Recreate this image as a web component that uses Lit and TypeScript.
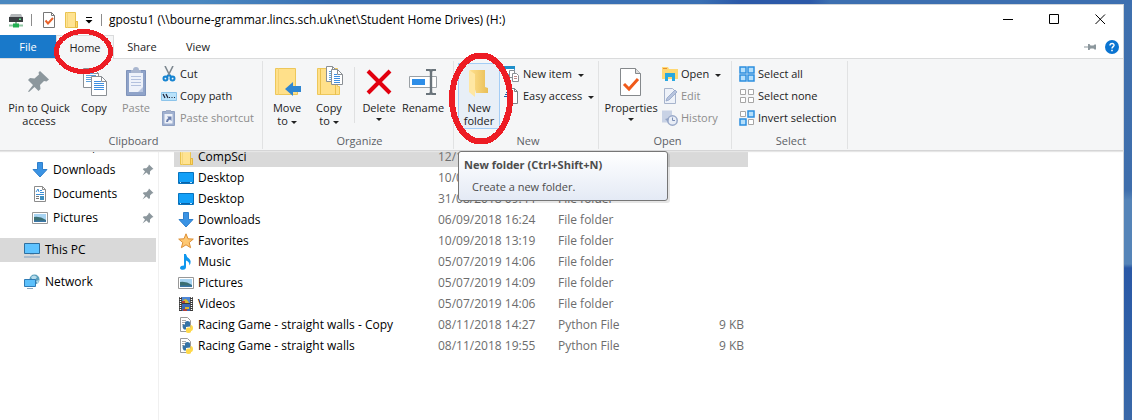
import { LitElement, html, css, svg, nothing } from "lit";
import { customElement, property } from "lit/decorators.js";

const docPath = (x: number, y: number, w: number, h: number, line = "#5aa2e0") => svg`
  <path d="M${x + 0.5} ${y + 0.5}h${w - 6}l5 5v${h - 6}h${-(w - 1)}z" fill="#fff" stroke="#8a8f94"/>
  <path d="M${x + w - 5.5} ${y + 0.5}v5h5" fill="none" stroke="#8a8f94"/>
  ${[0, 1, 2, 3, 4].map((i) => svg`<path d="M${x + 3} ${y + 5.5 + i * 2}h${i < 1 ? w - 9 : w - 6}" stroke="${line}"/>`)}`;

const icons: Record<string, { box: string; art: unknown }> = {
  drive: { box: "0 0 16 16", art: svg`<path d="M3 2h10l2 4H1z" fill="#b4b8ba"/><path d="M1 5h14v5H1z" fill="#3b3f42"/><path d="M11 6.500h2v1.500h-2z" fill="#5be08a"/><path d="M7 10h2v2H7z" fill="#8fb79b"/><path d="M1 12.500h14v2H1z" fill="#8fc7a2"/><path d="M5 11.500h6v4H5z" fill="#22b052"/>` },
  check: { box: "0 0 16 16", art: svg`<path d="M2.500 .5h8l3 3v12h-11z" fill="#fff" stroke="#777"/><path d="M10.500 .5v3h3" fill="none" stroke="#777"/><path d="M4.500 8.500l2.500 3 5-5.500" fill="none" stroke="#e8622a" stroke-width="2"/>` },
  folder: { box: "0 0 16 16", art: svg`<path d="M2.500 .5h10v9h2v6h-12z" fill="#ffe391" stroke="#e9c34f"/><path d="M4.500 .5v15" stroke="#f4d67c"/><path d="M12.500 9.500h2v6h-2z" fill="#ffd866" stroke="#e3b640"/>` },
  customize: { box: "0 0 8 8", art: svg`<path d="M1 1.500h6" stroke="#000"/><path d="M.5 4h7L4 7.500z" fill="#000"/>` },
  minimize: { box: "0 0 11 11", art: svg`<path d="M0 5.500h10" stroke="#000"/>` },
  maximize: { box: "0 0 11 11", art: svg`<path d="M.5.5h9v9h-9z" fill="none" stroke="#000"/>` },
  close: { box: "0 0 11 11", art: svg`<path d="M.5.5l9.500 9.500M10 .5L.5 10" fill="none" stroke="#000"/>` },
  collapse: { box: "0 0 12 8", art: svg`<path d="M0 4h5" stroke="#8c979d"/><path d="M4 1h1.500l1 1.500h3L10.500 1.500H12v5h-1.500l-1-1h-3L5.500 7H4z" fill="#8c979d"/>` },
  help: { box: "0 0 14 14", art: svg`<circle cx="7" cy="7" r="7" fill="#0a74d1"/><path d="M5 5.400C5 2.800 9.300 2.900 9 5.400 8.800 6.700 7 6.700 7 8.600" fill="none" stroke="#fff" stroke-width="1.500"/><path d="M6.200 9.800h1.600v1.500H6.200z" fill="#fff"/>` },
  pinBig: { box: "0 0 32 32", art: svg`<path d="M17 5l9 8.500-2.500 2-2.500-.5-4 4 .5 4-2 2-4-4L6 26l-1-.5L10 19l-5-5 2-2 4.500.5 4.500-4-.5-2z" fill="#8c979d"/>` },
  copyBig: { box: "0 0 32 32", art: svg`${docPath(5, 2, 16, 20)}${docPath(13, 10, 16, 20, "#3f8fe0")}` },
  pasteBig: { box: "0 0 32 32", art: svg`<path d="M6.500 4.500h19v25h-19z" fill="#8fa3c9" stroke="#7f93ba"/><path d="M9 7h14v19H9z" fill="#eef2fa"/><path d="M11 4h2q0-3 3-3t3 3h2v3H11z" fill="#a9b6cf"/><path d="M11 10.500h10M11 13.500h10M11 16.500h10M11 19.500h10" stroke="#b3c1de"/><path d="M18 26h5v-5z" fill="#b9c6e0"/>` },
  cut: { box: "0 0 16 16", art: svg`<path d="M4 0l5 10M12 0L7 10" stroke="#7d8890" stroke-width="1.600"/><path d="M7.500 9L5 12M8.500 9l2.500 3" stroke="#1684d1" stroke-width="2"/><circle cx="4.500" cy="12.500" r="2" fill="none" stroke="#1684d1" stroke-width="2"/><circle cx="11.500" cy="12.500" r="2" fill="none" stroke="#1684d1" stroke-width="2"/>` },
  path: { box: "0 0 16 16", art: svg`<path d="M.5 4.500h15v8H.5z" fill="#b9e2fb" stroke="#8dc4ea"/><path d="M2 6l2 4M5 6l2 4" stroke="#223" stroke-width="1.200"/><path d="M8 9.500h1M10.500 9.500h1M13 9.500h1" stroke="#223"/>` },
  shortcut: { box: "0 0 16 16", art: svg`<path d="M1.500 1.500h12v14h-12z" fill="#9fb0d0" stroke="#8fa0c2"/><path d="M5 0h5v3H5z" fill="#a3b0ca"/><path d="M3.500 4h8v9.500h-8z" fill="#eef2f9"/><path d="M5 12q0-3 2.500-4L6 6.500h4.500V11L9 9.500Q7 10 7 12z" fill="#6b7fae"/>` },
  moveBig: { box: "0 0 32 32", art: svg`<path d="M4.500 2.500h20v18h2v8h-22z" fill="#ffe08a" stroke="#edc75a"/><path d="M7.500 2.500v26" stroke="#f4d273"/><path d="M14 23l8-7v4h8v6h-8v4z" fill="#2f86d1"/>` },
  copyToBig: { box: "0 0 32 32", art: svg`<path d="M4.500 2.500h20v18h2v8h-22z" fill="#ffe08a" stroke="#edc75a"/><path d="M7.500 2.500v26M22.500 19v10" stroke="#e9c04e"/>${docPath(13, 0, 12, 16)}${docPath(18, 3, 12, 16, "#3f8fe0")}` },
  deleteBig: { box: "0 0 32 32", art: svg`<path d="M5 5l22 22M27 5L5 27" stroke="#e2000f" stroke-width="4"/>` },
  renameBig: { box: "0 0 32 32", art: svg`<path d="M2.500 10.500h27v11h-27z" fill="#fff" stroke="#9aa0a5"/><path d="M5 13h13v6H5z" fill="#2e8ee8"/><path d="M24 5v22" stroke="#6a747b" stroke-width="2.400"/><path d="M19 4h4l1 2 1-2h4M19 28h4l1-2 1 2h4" fill="none" stroke="#6a747b" stroke-width="2"/>` },
  newFolderBig: { box: "0 0 32 32", art: svg`<defs><linearGradient id="fold"><stop offset="0" stop-color="#ffdf8c"/><stop offset="1" stop-color="#e9bf58"/></linearGradient></defs><path d="M7 4h15v17l3 1v5H13z" fill="url(#fold)"/><path d="M6 4l6 4v23l-6-5z" fill="#ffe7a3"/>` },
  newItem: { box: "0 0 16 16", art: svg`<path d="M.5.5h10v8H.5z" fill="#fff" stroke="#4a9fd4"/><path d="M0 0h11v3H0z" fill="#1f8fca"/><path d="M5.500 4.500h5v7h-5z" fill="#fff" stroke="#8a8f94"/><path d="M8.500 7.500h4l2 2v6h-6z" fill="#fff" stroke="#8a8f94"/><path d="M10 10.500h3M10 12.500h3" stroke="#b88"/>` },
  easy: { box: "0 0 16 16", art: svg`<path d="M3.500.5h7l3 3v12h-10z" fill="#fff" stroke="#7d8286"/><path d="M10.500.5v3h3" fill="none" stroke="#7d8286"/><path d="M2 4.500h5M1 6.500h5M0 8.500h5" stroke="#1d5fa8"/>` },
  propsBig: { box: "0 0 32 32", art: svg`<path d="M5.500 2.500h15l5 5v22h-20z" fill="#fff" stroke="#85898c"/><path d="M20.500 2.500v5h5" fill="#ddd" stroke="#85898c"/><path d="M9 18l5 5 9-10" fill="none" stroke="#f05a1a" stroke-width="3"/>` },
  open: { box: "0 0 16 16", art: svg`<path d="M0 1h6l1 2h9v10H0z" fill="#ffd873"/><path d="M1 2h4v1H1z" fill="#e8902f"/><path d="M3 15V7h10v8h-3v-4H6v4z" fill="#29a8e0"/>` },
  edit: { box: "0 0 16 16", art: svg`<path d="M2.500.5h8l3 3v12h-11z" fill="#eef2f9" stroke="#a7b4cc"/><path d="M4 13l1-3 8-8 2 2-8 8z" fill="#b7c4de" stroke="#93a4c6" stroke-width=".8"/>` },
  history: { box: "0 0 16 16", art: svg`<path d="M0 .5h10v12H0z" fill="#c8d2e5"/><circle cx="10.500" cy="10.500" r="4.700" fill="#e8edf6" stroke="#98a8c8" stroke-width="1.500"/><path d="M10.500 7.500v3h2.500" fill="none" stroke="#7d8fb5"/><path d="M3 9l3 3 1-4z" fill="#93a4c6"/>` },
  selectAll: { box: "0 0 16 16", art: svg`<path d="M1 1h6v6H1zM9 1h6v6H9zM1 9h6v6H1zM9 9h6v6H9z" fill="#b5dffb" stroke="#2b8fe0" stroke-width="1.500"/>` },
  selectNone: { box: "0 0 16 16", art: svg`<path d="M1.500 1.500h5v5h-5zM9.500 1.500h5v5h-5zM1.500 9.500h5v5h-5zM9.500 9.500h5v5h-5z" fill="#fff" stroke="#a6a6a6"/>` },
  invert: { box: "0 0 16 16", art: svg`<path d="M1.500 1.500h5v5h-5zM9.500 9.500h5v5h-5z" fill="#fff" stroke="#a6a6a6"/><path d="M9 1h6v6H9zM1 9h6v6H1z" fill="#b5dffb" stroke="#2b8fe0" stroke-width="1.500"/>` },
  desktop: { box: "0 0 16 16", art: svg`<path d="M.5 2.500h15v11H.5z" fill="#12a0f8" stroke="#0873bd"/><path d="M1 12.500h14" stroke="#0a62a8"/><path d="M2 12.500h1M12 12.500h2" stroke="#bfe4ff"/>` },
  download: { box: "0 0 16 16", art: svg`<path d="M5.500.5h5v7h4.500L8 15 1 7.500h4.500z" fill="#3a93e4" stroke="#2f7fcb"/>` },
  documents: { box: "0 0 16 16", art: svg`<path d="M2.500.5h8l3 3v12h-11z" fill="#fff" stroke="#8c8c8c"/><path d="M10.500.5v3h3" fill="none" stroke="#8c8c8c"/><path d="M4 6l2-3 1 3M8 4.500h2M8 6.500h4M4 8.500h8" fill="none" stroke="#3c8fd6"/><path d="M4 10.500h3M4 12.500h3" stroke="#777"/><path d="M8 10h4v4H8z" fill="#3e8fc0"/>` },
  pictures: { box: "0 0 16 16", art: svg`<path d="M.5 2.500h15v11H.5z" fill="#fff" stroke="#989898"/><path d="M2 4h12v8H2z" fill="#a8d4f2"/><path d="M2 7q6-1 12 3v2H2z" fill="#3c6f73"/><path d="M2 10.500h12V12H2z" fill="#3a77a8"/>` },
  pc: { box: "0 0 16 16", art: svg`<path d="M.5 1.500h15v10H.5z" fill="#5fc3ff" stroke="#2f6f9f"/><path d="M6 12h4v1H6z" fill="#b5c3cc"/><path d="M0 15h16" stroke="#7f9fc0"/>` },
  network: { box: "0 0 16 16", art: svg`<circle cx="10.500" cy="5.500" r="5" fill="#5a9fbc"/><path d="M7 3q3-3 6 0l-2 3-3-1zM12 7l3-1-1 4z" fill="#b6dcec"/><path d="M.5 5.500h11v7H.5z" fill="#5cc0fb" stroke="#2f7bb5"/><path d="M3 14.500h6" stroke="#8aa5bb"/>` },
  star: { box: "0 0 16 16", art: svg`<path d="M8 .8l2 5 5.300.3-4.100 3.400 1.400 5.200L8 11.800l-4.600 2.900 1.400-5.200L.7 6.100 6 5.800z" fill="#fec873" stroke="#dd8f35"/>` },
  music: { box: "0 0 16 16", art: svg`<path d="M6 0h2q.5 3 3 4.500 3 2.500.5 7 0-4-3.500-5V13q0 2.500-3 2.800-3 0-3-2 .5-2.300 4-2.300z" fill="#0f97ee"/>` },
  videos: { box: "0 0 16 16", art: svg`<path d="M1 1h14v14H1z" fill="#3b3b3b"/><path d="M4 1h8v6H4z" fill="#4d86d6"/><path d="M4 8h8v7H4z" fill="#3d68b4"/><path d="M5 4l3-1 2 2 1 2H7zM7 11h4v2H7z" fill="#d9b92c"/><path d="M4 5h3v2H4zM5 13h4v2H5z" fill="#b2403a"/><path d="M2.500 1v14M13.500 1v14" stroke="#fff" stroke-width="1.400" stroke-dasharray="1 1"/>` },
  python: { box: "0 0 16 16", art: svg`<path d="M2.500.5h7l3 3v11h-10z" fill="#fff" stroke="#9a9a9a"/><path d="M4 3.500h4M4 5.500h5M4 7.500h2" stroke="#aaa"/><path d="M7 5.500q0-1.500 2.500-1.500T12 5.500v4L8 10v2.500H6Q4.500 11.500 4.500 9T7 7.500z" fill="#3673a5"/><path d="M12.500 8q2.500 0 2.500 3t-2 3v.5q0 1.500-2.500 1.500T8 14.500V12q0-1.500 2-1.500h2.500z" fill="#ffd94a"/>` },
  pin: { box: "0 0 12 12", art: svg`<path d="M7 .5L11.500 5l-1.500.5-2 2v2.500l-1 1-2.500-2.500L.5 11.500l2.500-4L.8 5.300l1-1h2.500l2-2z" fill="#8c979d"/>` },
};

@customElement("ui-icon")
class UiIcon extends LitElement {
  @property() name = "";
  static styles = css`
    :host { display: block; flex: none; width: 16px; height: 16px; }
    svg { display: block; width: 100%; height: 100%; }
  `;
  render() {
    const icon = icons[this.name];
    return html`<svg viewBox=${icon.box} aria-hidden="true">${icon.art}</svg>`;
  }
}

const quickAccess = [
  { icon: "desktop", label: "Desktop" },
  { icon: "download", label: "Downloads" },
  { icon: "documents", label: "Documents" },
  { icon: "pictures", label: "Pictures" },
];

const files = [
  ["folder", "CompSci", "12/10/2018 11:05", "File folder", ""],
  ["desktop", "Desktop", "10/09/2018 13:19", "File folder", ""],
  ["desktop", "Desktop", "31/08/2018 09:44", "File folder", ""],
  ["download", "Downloads", "06/09/2018 16:24", "File folder", ""],
  ["star", "Favorites", "10/09/2018 13:19", "File folder", ""],
  ["music", "Music", "05/07/2019 14:06", "File folder", ""],
  ["pictures", "Pictures", "05/07/2019 14:09", "File folder", ""],
  ["videos", "Videos", "05/07/2019 14:06", "File folder", ""],
  ["python", "Racing Game - straight walls - Copy", "08/11/2018 14:27", "Python File", "9 KB"],
  ["python", "Racing Game - straight walls", "08/11/2018 19:55", "Python File", "9 KB"],
];

@customElement("app-root")
class AppRoot extends LitElement {
  static styles = css`
    :host {
      display: block;
      box-sizing: border-box;
      min-height: 100vh;
      padding: 4px 8px 0 0;
      background:
        linear-gradient(90deg, #4a88c0, #4a88c0 200px, #3a70b4 330px, #3a70b4 700px, #2c59a8 740px, #2c59a8 810px, #3d6fb0 830px) 0 0 / 100% 5px no-repeat,
        linear-gradient(180deg, #3f70ae, #3f6eac 190px, #5584b8 200px, #5584b8 264px, #2a58a6 268px, #3163a8 360px, #3a68a8 100%);
      font: 12px/16px "Open Sans", "Noto Sans", sans-serif;
      color: #222;
      position: relative;
      overflow: hidden;
    }
    * { box-sizing: border-box; }
    button { font: inherit; color: inherit; background: none; border: 0; padding: 0; margin: 0; }
    .window {
      display: flex; flex-direction: column; min-height: calc(100vh - 4px);
      background: #fff; border: 1px solid #d0d4d8; border-width: 1px 1px 0 0;
    }
    .title { display: flex; align-items: center; height: 30px; padding-left: 8px; color: #000; }
    .title .rule { width: 1px; height: 12px; margin: 0 9px 0 7px; background: #8c8c8c; }
    .title .gap { margin-left: 6px; }
    .title .small { width: 8px; height: 8px; margin-left: 6px; }
    .title .caption { margin: 0 auto 0 0; font: inherit; white-space: nowrap; }
    .title .rule.tight { margin: 0 7px 0 8px; }
    .controls { display: flex; align-self: flex-start; }
    .controls button { width: 46px; height: 29px; display: grid; place-items: center; }
    .controls ui-icon { width: 11px; height: 11px; }
    .tabs { display: flex; align-items: stretch; height: 24px; border-bottom: 1px solid #dadbdc; font-size: 11px; }
    .tab { width: 56px; }
    .tab.file { background: #1979ca; color: #fff; }
    .tab.home { width: 58px; margin-bottom: -1px; border: 1px solid #dadbdc; border-bottom: 0; background: #f5f6f7; }
    .tabs .end { display: flex; align-items: center; gap: 9px; margin-left: auto; padding-right: 4px; }
    .end .collapse { width: 12px; height: 8px; }
    .end .help { width: 14px; height: 14px; }
    .ribbon {
      display: flex; height: 92px; padding-top: 2px; background: #f5f6f7; position: relative; z-index: 1;
      border-bottom: 1px solid #d5d5d6; box-shadow: 0 1px 1px #e6e6e6; font-size: 11px;
    }
    .group { display: flex; flex-direction: column; flex: none; margin-bottom: 1px; border-right: 1px solid #e1e2e3; }
    .group h2 { margin: auto 0 0; font: inherit; text-align: center; color: #5c5f66; }
    .clipboard { width: 263px; padding-left: 5px; }
    .organize { width: 191px; padding-left: 3px; }
    .new { width: 145px; padding-left: 4px; }
    .openset { width: 133px; padding-left: 5px; }
    .select { width: 116px; padding-left: 3px; }
    .tools { display: flex; padding-top: 2px; }
    .big { width: 42px; height: 66px; display: flex; flex-direction: column; align-items: center; line-height: 13px; white-space: nowrap; }
    .big ui-icon { width: 32px; height: 32px; margin: 3px 0; }
    .big.wide { width: 68px; }
    .big.mid { width: 46px; }
    .big.props { width: 54px; }
    .big.hot { border: 1px solid #a4cdf5; background: #e8eff7; }
    .big.hot ui-icon { margin-top: 2px; }
    .arrow { display: inline-block; border: 3px solid transparent; border-top-color: #222; border-bottom: 0; margin-left: 3px; vertical-align: middle; }
    .alone { margin: 4px 0 0; }
    .divider { width: 1px; height: 56px; margin: 4px 3px 4px 4px; background: #dfe0e1; }
    .stack { display: flex; flex-direction: column; padding-left: 4px; }
    .row { display: flex; align-items: center; height: 22px; gap: 3px; white-space: nowrap; }
    .off { color: #8d8d8d; }
    .body { display: flex; flex: 1; overflow: hidden; }
    nav { width: 159px; border-right: 1px solid #f0f0f0; margin-top: -17px; flex: none; color: #000; padding-right: 2px; }
    nav a { display: flex; align-items: center; height: 24px; gap: 5px; padding: 0 2px 0 24px; color: inherit; text-decoration: none; }
    nav a.child { padding-left: 32px; }
    nav a.section { margin: 8px 0; }
    nav a.current { background: #d9d9d9; }
    nav .pin { width: 12px; height: 12px; margin-left: auto; }
    .files { margin-top: -5px; padding-left: 15px; }
    table { border-collapse: collapse; table-layout: fixed; width: 574px; color: #6d6d6d; }
    td { height: 21px; padding: 0; white-space: nowrap; }
    .c-name { width: 264px; }
    .c-col { width: 120px; }
    td:last-child { text-align: right; padding-right: 4px; }
    .name { display: flex; align-items: center; gap: 4px; padding-left: 4px; color: #000; }
    tr.picked { background: #d9d9d9; }
    .tip {
      position: absolute; left: 458px; top: 151px; z-index: 3; width: 210px; height: 50px; padding: 5px;
      display: flex; flex-direction: column; justify-content: space-between;
      border: 1px solid #767676; border-radius: 3px; color: #4c4c4c; font-size: 11px;
      background: linear-gradient(#fff, #e4eaf5); box-shadow: 2px 2px 0 #0000001a;
    }
    .tip span { padding-left: 8px; }
    .marks { position: absolute; left: 0; top: 0; z-index: 4; width: 540px; height: 160px; pointer-events: none; }
  `;

  big(icon: string, lines: string[], arrow = "", cls = "") {
    return html`<button class="big ${cls}"><ui-icon name=${icon}></ui-icon>
      <span>${lines[0]}</span>
      ${lines[1] ? html`<span>${lines[1]}${arrow ? html`<i class="arrow"></i>` : nothing}</span>` : nothing}
      ${arrow === "alone" ? html`<i class="arrow alone"></i>` : nothing}
    </button>`;
  }

  row(icon: string, label: string, arrow = false, off = false) {
    return html`<button class="row ${off ? "off" : ""}"><ui-icon name=${icon}></ui-icon>
      <span>${label}${arrow ? html` <i class="arrow"></i>` : nothing}</span></button>`;
  }

  render() {
    return html`
      <main class="window">
        <header class="title">
          <ui-icon name="drive"></ui-icon><span class="rule"></span>
          <ui-icon name="check"></ui-icon><ui-icon class="gap" name="folder"></ui-icon>
          <ui-icon class="small" name="customize"></ui-icon><span class="rule tight"></span>
          <h1 class="caption">gpostu1 (\\\\bourne-grammar.lincs.sch.uk\\net\\Student Home Drives) (H:)</h1>
          <div class="controls">
            <button aria-label="Minimize"><ui-icon name="minimize"></ui-icon></button>
            <button aria-label="Maximize"><ui-icon name="maximize"></ui-icon></button>
            <button aria-label="Close"><ui-icon name="close"></ui-icon></button>
          </div>
        </header>
        <div class="tabs">
          <button class="tab file">File</button><button class="tab home">Home</button>
          <button class="tab">Share</button><button class="tab">View</button>
          <div class="end">
            <button aria-label="Collapse ribbon"><ui-icon class="collapse" name="collapse"></ui-icon></button>
            <button aria-label="Help"><ui-icon class="help" name="help"></ui-icon></button>
          </div>
        </div>
        <div class="ribbon">
          <section class="group clipboard">
            <div class="tools">
              ${this.big("pinBig", ["Pin to Quick", "access"], "", "wide")}
              ${this.big("copyBig", ["Copy"])}
              ${this.big("pasteBig", ["Paste"], "", "off")}
              <div class="stack">
                ${this.row("cut", "Cut")}${this.row("path", "Copy path")}${this.row("shortcut", "Paste shortcut", false, true)}
              </div>
            </div>
            <h2>Clipboard</h2>
          </section>
          <section class="group organize">
            <div class="tools">
              ${this.big("moveBig", ["Move", "to"], "inline")}
              ${this.big("copyToBig", ["Copy", "to"], "inline")}
              <span class="divider"></span>
              ${this.big("deleteBig", ["Delete"], "alone")}
              ${this.big("renameBig", ["Rename"], "", "mid")}
            </div>
            <h2>Organize</h2>
          </section>
          <section class="group new">
            <div class="tools">
              ${this.big("newFolderBig", ["New", "folder"], "", "hot")}
              <div class="stack">${this.row("newItem", "New item", true)}${this.row("easy", "Easy access", true)}</div>
            </div>
            <h2>New</h2>
          </section>
          <section class="group openset">
            <div class="tools">
              ${this.big("propsBig", ["Properties"], "alone", "props")}
              <div class="stack">
                ${this.row("open", "Open", true)}${this.row("edit", "Edit", false, true)}${this.row("history", "History", false, true)}
              </div>
            </div>
            <h2>Open</h2>
          </section>
          <section class="group select">
            <div class="tools"><div class="stack">
              ${this.row("selectAll", "Select all")}${this.row("selectNone", "Select none")}${this.row("invert", "Invert selection")}
            </div></div>
            <h2>Select</h2>
          </section>
        </div>
        <div class="body">
          <nav>
            ${quickAccess.map((q) => html`<a class="child" href="#"><ui-icon name=${q.icon}></ui-icon>${q.label}<ui-icon class="pin" name="pin"></ui-icon></a>`)}
            <a class="section current" href="#"><ui-icon name="pc"></ui-icon>This PC</a>
            <a class="section" href="#"><ui-icon name="network"></ui-icon>Network</a>
          </nav>
          <div class="files">
            <table>
              <colgroup><col class="c-name"><col class="c-col"><col class="c-col"><col></colgroup>
              <tbody>
                ${files.map(([icon, name, date, type, size], i) => html`<tr class=${i ? "" : "picked"}>
                  <td><div class="name"><ui-icon name=${icon}></ui-icon>${name}</div></td>
                  <td>${date}</td><td>${type}</td><td>${size}</td></tr>`)}
              </tbody>
            </table>
          </div>
        </div>
      </main>
      <div class="tip" role="tooltip"><strong>New folder (Ctrl+Shift+N)</strong><span>Create a new folder.</span></div>
      <svg class="marks" viewBox="0 0 540 160" aria-hidden="true">
        <g fill="none" stroke="#ed1c24" shape-rendering="crispEdges">
          <ellipse cx="83.500" cy="51.500" rx="27" ry="20" stroke-width="5"/>
          <ellipse cx="481" cy="98.500" rx="29" ry="43" stroke-width="6"/>
        </g>
      </svg>
    `;
  }
}
